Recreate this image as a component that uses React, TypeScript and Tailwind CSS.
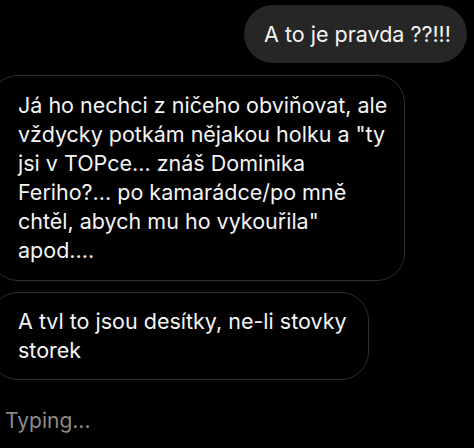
export default function App() {
  return (
    <div
      className="w-[474px] h-[448px] overflow-hidden bg-black text-[#f4f4f4]"
      style={{ fontFamily: 'Inter, "Noto Sans", sans-serif' }}
    >
      <div className="flex justify-end pt-[5px] pr-[7px]">
        <div className="flex h-[58px] items-center rounded-full bg-[#262626] pl-[20px] pr-[16px] text-[21.5px]">
          A to je pravda ??!!!
        </div>
      </div>

      <div className="ml-[-10px] mt-[12px] w-[415px] rounded-[28px] border border-[#2f2f2f] pl-[27px] pr-[8px] py-[15px] text-[21.5px] leading-[29px]">
        Já ho nechci z ničeho obviňovat, ale vždycky potkám nějakou holku a "ty
        jsi v TOPce... znáš Dominika Feriho?... po kamarádce/po mně chtěl,
        abych mu ho vykouřila" apod....
      </div>

      <div className="ml-[-10px] mt-[11px] w-[379px] rounded-[28px] border border-[#2f2f2f] pl-[27px] pr-[8px] py-[14px] text-[21.5px] leading-[29px]">
        A tvl to jsou desítky, ne-li stovky storek
      </div>

      <div className="mt-[27px] pl-[5px] text-[21px] leading-[28px] text-[#8a8a8a]">
        Typing...
      </div>
    </div>
  )
}
